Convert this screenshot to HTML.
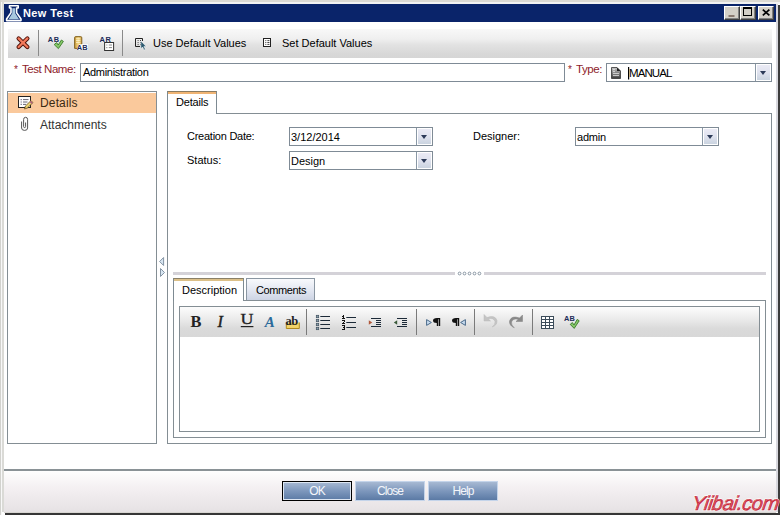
<!DOCTYPE html>
<html><head><meta charset="utf-8">
<style>
*{box-sizing:border-box;margin:0;padding:0}
html,body{width:780px;height:515px;overflow:hidden;background:#fff}
body{position:relative;font-family:"Liberation Sans",sans-serif;font-size:11px;color:#000}
.a{position:absolute}
.t{position:absolute;white-space:nowrap;line-height:11px;font-size:11px}
.frame{left:0;top:0;width:780px;height:515px;background:#fff;
  border-left:2px solid #dedede;border-top:2px solid #dcdcdc;border-right:2px solid #5a5a5a;border-bottom:2px solid #4a4a4a}
.title{left:4px;top:4px;width:772px;height:18px;background:#0a246a}
.tbtn{position:absolute;top:2px;width:16px;height:14px;background:#d4d0c8;border:1px solid;border-color:#fff #404040 #404040 #fff;box-shadow:inset -1px -1px 0 #808080}
.tb{left:8px;top:29px;width:764px;height:29px;background:linear-gradient(#f8f8f8,#efefef 35%,#e2e2e2 55%,#d8d8d8 85%,#d6d6d6)}
.sep{position:absolute;width:1px;background:#8a8a8a}
.inp{position:absolute;background:#fff;border:1px solid #7f8b96}
.dd{position:absolute;top:0;right:0;bottom:0;width:16px;border-left:1px solid #8a98a6;background:linear-gradient(#ececf6,#dfe2ee 50%,#c8d2de);box-shadow:inset 0 0 0 1px #fff}
.dd:after{content:"";position:absolute;left:3.5px;top:7px;border-left:3.5px solid transparent;border-right:3.5px solid transparent;border-top:4px solid #2c3a58}
.red{color:#8e1c2a}
.box{position:absolute;border:1px solid #848e94}
.btn{position:absolute;height:20px;background:linear-gradient(#a7b9d3,#7d97bc 50%,#5b7aa5);border:1px solid #c4d4ea;color:#f4f6fa;text-align:center;font-size:12px;line-height:18px;letter-spacing:-0.9px}
.etb{left:180px;top:307px;width:579px;height:30px;background:linear-gradient(#fcfcfc,#f4f4f4 20%,#e6e6e6 50%,#dadada 72%,#d8d8d8)}
</style></head><body>
<div class="a" style="left:0;top:0;width:780px;height:2px;background:#dcdad4"></div>
<div class="a" style="left:0;top:2px;width:780px;height:2px;background:#f2f2f2"></div>
<div class="a" style="left:0;top:0;width:1px;height:515px;background:#d2d2ce"></div>
<div class="a" style="left:1px;top:2px;width:1px;height:513px;background:#f8f8f8"></div>
<div class="a" style="left:2px;top:2px;width:2px;height:510px;background:#dadad6"></div>
<div class="a" style="left:776px;top:4px;width:2px;height:508px;background:#d8d8de"></div>
<div class="a" style="left:778px;top:5px;width:2px;height:508px;background:#3c3c3c"></div>
<div class="a" style="left:4px;top:512px;width:772px;height:1px;background:#d8d6d2"></div>
<div class="a" style="left:5px;top:513px;width:775px;height:2px;background:#363636"></div>
<div class="a title">
  <div class="tbtn" style="left:720px"></div>
  <div class="tbtn" style="left:736px"></div>
  <div class="tbtn" style="left:754px"></div>
</div>
<div class="t" style="left:23px;top:8px;color:#fff;font-weight:bold;letter-spacing:0.4px">New Test</div>

<div class="a tb">
  <div class="sep" style="left:30px;top:1px;height:26px"></div>
  <div class="sep" style="left:114px;top:1px;height:26px"></div>
</div>
<div class="t" style="left:153px;top:38px">Use Default Values</div>
<div class="t" style="left:282px;top:38px">Set Default Values</div>

<div class="t red" style="left:14px;top:64px;font-size:10px">*</div>
<div class="t red" style="left:22px;top:64px;font-size:11.5px;letter-spacing:-0.45px">Test Name:</div>
<div class="inp" style="left:80px;top:63px;width:485px;height:19px"></div>
<div class="t" style="left:83px;top:67px;letter-spacing:-0.3px">Administration</div>
<div class="t red" style="left:568px;top:64px;font-size:10px">*</div>
<div class="t red" style="left:576px;top:64px;font-size:11.5px;letter-spacing:-0.4px">Type:</div>
<div class="inp" style="left:606px;top:63px;width:166px;height:19px"><div class="dd"></div></div>
<div class="t" style="left:629px;top:68px;font-size:11.5px;letter-spacing:-0.9px">MANUAL</div>

<!-- left panel -->
<div class="box" style="left:7px;top:91px;width:150px;height:353px"></div>
<div class="a" style="left:8px;top:93px;width:148px;height:20px;background:#fac99c"></div>
<div class="t" style="left:40px;top:97px;font-size:12px;line-height:12px;color:#3a2a12;letter-spacing:0.15px">Details</div>
<div class="t" style="left:40px;top:119px;font-size:12px;line-height:12px;color:#333">Attachments</div>

<!-- tab panel -->
<div class="box" style="left:167px;top:113px;width:605px;height:331px"></div>
<div class="a" style="left:167px;top:91px;width:50px;height:23px;border:1px solid #7d8a92;border-top-color:#8a7c62;border-bottom:none;background:#fff;box-shadow:inset 0 2px 0 #f0b474"></div>
<div class="t" style="left:176px;top:97px;letter-spacing:-0.2px">Details</div>

<div class="t" style="left:187px;top:131px;letter-spacing:-0.25px">Creation Date:</div>
<div class="t" style="left:187px;top:155px">Status:</div>
<div class="inp" style="left:289px;top:127px;width:144px;height:19px"><div class="dd"></div></div>
<div class="t" style="left:291px;top:132px">3/12/2014</div>
<div class="inp" style="left:289px;top:151px;width:144px;height:19px"><div class="dd"></div></div>
<div class="t" style="left:291px;top:156px">Design</div>
<div class="t" style="left:473px;top:131px">Designer:</div>
<div class="inp" style="left:575px;top:127px;width:144px;height:19px"><div class="dd"></div></div>
<div class="t" style="left:577px;top:132px;letter-spacing:-0.2px">admin</div>

<!-- splitter -->
<div class="a" style="left:173px;top:272px;width:282px;height:3px;background:#d4d2d8"></div>
<div class="a" style="left:484px;top:272px;width:282px;height:3px;background:#d4d2d8"></div>

<!-- description tabs -->
<div class="box" style="left:173px;top:300px;width:593px;height:138px"></div>
<div class="a" style="left:173px;top:278px;width:71px;height:23px;border:1px solid #7d8a92;border-top-color:#8a8068;border-bottom:none;background:#fff;box-shadow:inset 0 2px 0 #dcc088"></div>
<div class="t" style="left:182px;top:285px">Description</div>
<div class="a" style="left:246px;top:278px;width:69px;height:22px;border:1px solid #8a96a2;border-bottom:none;background:linear-gradient(#f8f9fc,#e4e8f2 50%,#cdd4e4)"></div>
<div class="t" style="left:256px;top:285px;letter-spacing:-0.4px">Comments</div>

<div class="box" style="left:179px;top:306px;width:581px;height:126px"></div>
<div class="a etb"></div>

<!-- footer -->
<div class="a" style="left:4px;top:471px;width:772px;height:41px;background:linear-gradient(#fefefe,#f4f0f2 40%,#e6e2e4)"></div>
<div class="a" style="left:4px;top:469px;width:772px;height:2px;background:#8a9296"></div>
<div class="btn" style="left:282px;top:481px;width:70px;border-color:#000;box-shadow:inset 0 0 0 1px #dde6f2">OK</div>
<div class="btn" style="left:355px;top:481px;width:70px">Close</div>
<div class="btn" style="left:428px;top:481px;width:70px">Help</div>

<svg class="a" style="left:0;top:0" width="780" height="515" viewBox="0 0 780 515">
<!-- flask -->
<path d="M9.5,5.8 H18.2 V8 H16.6 V12.6 L21,19 V20.6 H6.6 V19 L11,12.6 V8 H9.5 Z" fill="#0a246a" stroke="#fff" stroke-width="1.6" stroke-linejoin="round"/>
<path d="M12.3,8.2 H15.2 V13.2 L19,19.2 H8.6 L12.3,13.2 Z" fill="#a8c8e0"/>
<!-- red X -->
<g stroke-linecap="round"><path d="M18.6,38.4 L27.4,47 M27.4,38.4 L18.6,47" stroke="#4e1008" stroke-width="4.2"/>
<path d="M18.6,38.4 L27.4,47 M27.4,38.4 L18.6,47" stroke="#f27a5c" stroke-width="2.3"/></g>
<!-- AB check -->
<text x="47.8" y="41.8" font-family="Liberation Sans" font-size="7.4" font-weight="bold" fill="#1c2c58" letter-spacing="0.5">AB</text>
<path d="M54.2,44.6 L56.6,42.6 L58.2,45 L61.4,40 L63.4,41.4 L58.4,48.6 Z" fill="#86c86a" stroke="#3a7a2a" stroke-width="0.9" stroke-linejoin="round"/>
<!-- doc + AB -->
<defs><linearGradient id="gold" x1="0" y1="0" x2="1" y2="0"><stop offset="0" stop-color="#c89838"/><stop offset="0.5" stop-color="#f4d888"/><stop offset="1" stop-color="#d0a040"/></linearGradient>
<linearGradient id="docg" x1="0" y1="0" x2="0" y2="1"><stop offset="0" stop-color="#c8c8c8"/><stop offset="1" stop-color="#3a3a3a"/></linearGradient></defs>
<path d="M74.6,48.4 V37.8 Q74.6,36.6 75.8,36.6 H80.6 Q81.8,36.6 81.8,37.8 V44 L77.2,48.4 Z" fill="url(#gold)" stroke="#7a5a18" stroke-width="0.9"/>
<path d="M76,38.8 H80.4 M76,40.6 H80.4 M76,42.4 H80.4" stroke="#fff8d8" stroke-width="0.8"/>
<path d="M76.5,50 L79,44.2 H88 V50 Z" fill="#fff"/>
<text x="76.8" y="49.6" font-family="Liberation Sans" font-size="7.4" font-weight="bold" fill="#1c2c58" letter-spacing="0.2">AB</text>
<!-- AR table -->
<text x="99.6" y="41.6" font-family="Liberation Sans" font-size="7.4" font-weight="bold" fill="#1c2c58" letter-spacing="0.5">AR</text>
<rect x="104.6" y="42.5" width="9" height="8" fill="#fff" stroke="#333" stroke-width="1"/>
<path d="M106.2,45 H107.4 M106.2,47.6 H107.4" stroke="#999" stroke-width="1.2"/>
<path d="M108.8,45 H112 M108.8,47.6 H112" stroke="#888" stroke-width="1"/>
<!-- use default -->
<path d="M135.5,46.5 V38.5 H142.5 V41" fill="none" stroke="#222" stroke-width="1"/>
<path d="M135.5,46.5 H140" stroke="#222" stroke-width="1"/>
<path d="M137.6,40.5 h1 M140,40.5 h1 M137.6,42.6 h1 M140,42.6 h1 M137.6,44.6 h1 M140,44.6 h1" stroke="#444" stroke-width="1"/>
<path d="M140.8,41 L146.2,46.4 H143.9 L145.4,49.4 L144,50 L142.6,47 L140.8,48.8 Z" fill="#2c5a70" stroke="#fff" stroke-width="0.5"/>
<!-- set default -->
<rect x="263.5" y="38.5" width="7" height="8" fill="#fff" stroke="#222" stroke-width="1"/>
<path d="M265.3,40.6 h1 M267.4,40.6 h2 M265.3,42.5 h1 M267.4,42.5 h2 M265.3,44.4 h1 M267.4,44.4 h2" stroke="#444" stroke-width="1"/>
<!-- type doc icon -->
<path d="M611.5,67.5 H617 L620.5,71 V78.5 H611.5 Z" fill="url(#docg)" stroke="#333" stroke-width="0.8"/><path d="M617,67.5 V71 H620.5 Z" fill="#222"/>
<path d="M613,69.6 H615 M613,71.6 H615 M613,73.6 H619 M613,75.6 H619" stroke="#e0e0e0" stroke-width="0.9"/>
<rect x="628" y="67" width="1.2" height="12.5" fill="#000"/>
<!-- details icon -->
<rect x="18.5" y="96.5" width="12" height="11" fill="#fff" stroke="#222" stroke-width="1"/>
<path d="M20.5,99.6 h1.5 M20.5,102 h1.5 M20.5,104.4 h1.5" stroke="#889" stroke-width="1.2"/>
<path d="M23,99.6 H28.5 M23,102 H27.5 M23,104.4 H26" stroke="#556" stroke-width="0.9"/>
<path d="M24.5,109 L25.4,106 L31,100.6 L33,102.6 L27.4,108 Z" fill="#e8d070" stroke="#5a4010" stroke-width="0.7"/>
<path d="M30.2,101.4 L32.2,103.4" stroke="#b06080" stroke-width="1.6"/>
<!-- paperclip -->
<path d="M21.6,121.5 V128 Q21.6,130.4 24.6,130.4 Q27.6,130.4 27.6,128 V119.5 Q27.6,117.3 25.6,117.3 Q23.6,117.3 23.6,119.5 V126.5 Q23.6,127.6 24.6,127.6 Q25.6,127.6 25.6,126.5 V122.5" fill="none" stroke="#555" stroke-width="1"/>
<!-- splitter arrows -->
<path d="M163.6,257.5 V265.5 L159.6,261.5 Z" fill="#d8e6f2" stroke="#8494a4" stroke-width="1"/>
<path d="M160.5,268.5 V276.5 L164.5,272.5 Z" fill="#d8e6f2" stroke="#8494a4" stroke-width="1"/>
<!-- splitter dots -->
<g fill="#fff" stroke="#7e8c9a" stroke-width="0.9"><circle cx="459.6" cy="273.5" r="1.4"/><circle cx="464.5" cy="273.5" r="1.4"/><circle cx="469.5" cy="273.5" r="1.4"/><circle cx="474.5" cy="273.5" r="1.4"/><circle cx="479.4" cy="273.5" r="1.4"/></g>
<!-- editor toolbar separators -->
<path d="M306.5,309 V335 M416.5,309 V335 M474.5,309 V335 M532.5,309 V335" stroke="#7a7a7a" stroke-width="1"/>
<!-- B I U A ab -->
<text x="190.4" y="327" font-family="Liberation Serif" font-size="16.4" font-weight="bold" fill="#222">B</text>
<text x="217.4" y="327" font-family="Liberation Serif" font-size="16.4" font-style="italic" fill="#222" stroke="#222" stroke-width="0.4">I</text>
<text x="0" y="0" font-family="Liberation Serif" font-size="14" fill="#222" stroke="#222" stroke-width="0.3" transform="translate(240.6,323.8) scale(1.28,0.98)">U</text>
<rect x="240.8" y="326" width="12.6" height="1.2" fill="#222"/>
<text x="264.8" y="327" font-family="Liberation Serif" font-size="15" font-style="italic" font-weight="bold" fill="#2a6a9a">A</text>
<path d="M286.3,322.5 V328.5 H299.3 V322.5" fill="#f0d060" stroke="#b08a20" stroke-width="1"/>
<rect x="287.3" y="325" width="11" height="2.6" fill="#f2d46a"/>
<text x="285.4" y="324.8" font-family="Liberation Serif" font-size="12.5" font-weight="bold" fill="#222" letter-spacing="-0.4">ab</text>
<!-- bullets -->
<g fill="#8aa0aa" stroke="#405060" stroke-width="0.7"><rect x="316.3" y="315.3" width="2.4" height="2.4"/><rect x="316.3" y="319.3" width="2.4" height="2.4"/><rect x="316.3" y="323.3" width="2.4" height="2.4"/><rect x="316.3" y="327.3" width="2.4" height="2.4"/></g>
<path d="M320.3,316.5 H330 M320.3,320.5 H330 M320.3,324.5 H330 M320.3,328.5 H330" stroke="#1c2a38" stroke-width="1.2"/>
<!-- numbers -->
<g fill="#111" shape-rendering="crispEdges"><rect x="343" y="315" width="1" height="1"/><rect x="342" y="316" width="1" height="1"/><rect x="343" y="316" width="1" height="1"/><rect x="343" y="317" width="1" height="1"/><rect x="342" y="318" width="1" height="1"/><rect x="343" y="318" width="1" height="1"/><rect x="344" y="318" width="1" height="1"/><rect x="342" y="320" width="1" height="1"/><rect x="343" y="320" width="1" height="1"/><rect x="344" y="320" width="1" height="1"/><rect x="344" y="321" width="1" height="1"/><rect x="343" y="322" width="1" height="1"/><rect x="342" y="323" width="1" height="1"/><rect x="343" y="323" width="1" height="1"/><rect x="344" y="323" width="1" height="1"/><rect x="342" y="325" width="1" height="1"/><rect x="343" y="325" width="1" height="1"/><rect x="344" y="325" width="1" height="1"/><rect x="344" y="326" width="1" height="1"/><rect x="343" y="327" width="1" height="1"/><rect x="344" y="327" width="1" height="1"/><rect x="344" y="328" width="1" height="1"/><rect x="342" y="329" width="1" height="1"/><rect x="343" y="329" width="1" height="1"/><rect x="344" y="329" width="1" height="1"/></g>
<path d="M346.3,317.5 H356 M346.3,322.5 H356 M346.3,327.5 H356" stroke="#1c2a38" stroke-width="1.2"/>
<!-- indent -->
<path d="M371,318.5 H381 M376,320.5 H381 M376,322.5 H381 M376,324.5 H381 M371,326.5 H381" stroke="#1c2a38" stroke-width="1"/>
<path d="M368.8,320.3 L372.3,322.5 L368.8,324.7 Z" fill="#b0583a"/>
<!-- outdent -->
<path d="M397,318.5 H407 M402,320.5 H407 M402,322.5 H407 M402,324.5 H407 M397,326.5 H407" stroke="#1c2a38" stroke-width="1"/>
<path d="M397.2,320.3 L393.8,322.5 L397.2,324.7 Z" fill="#3a5a3a"/>
<!-- LTR RTL -->
<path d="M426.6,319.6 V325.4 L431.4,322.5 Z" fill="#c8dcf0" stroke="#4a6a8a" stroke-width="1"/>
<path transform="translate(433,0)" d="M4,318 H7.2 V326 H5.8 V319.3 H5.2 V326 H3.8 V323 Q0,323 0,320.5 Q0,318 4,318 Z" fill="#111"/>
<path transform="translate(452,0)" d="M4,318 H7.2 V326 H5.8 V319.3 H5.2 V326 H3.8 V323 Q0,323 0,320.5 Q0,318 4,318 Z" fill="#111"/>
<path d="M465.4,319.6 V325.4 L460.6,322.5 Z" fill="#c8dcf0" stroke="#4a6a8a" stroke-width="1"/>
<!-- undo redo -->
<path d="M484,314.5 V321 H490.5 L488.2,318.8 Q493.5,317.5 495,321.5 Q495.5,324.5 492.2,327 Q497.5,325 497,320.5 Q495,314.5 487,317.5 Z" fill="#c4c4c4" stroke="#b8b8b8" stroke-width="0.5"/>
<path d="M522.5,315 V321.5 H516 L518.3,319.3 Q513,318 511.5,322 Q511,325 514.3,327.8 Q509,325.5 509.5,321 Q511.5,315 519.5,318 Z" fill="#8a8a8a" stroke="#808080" stroke-width="0.5"/>
<!-- table -->
<rect x="541" y="316" width="13" height="13" fill="#fff"/><g fill="#3c4c5a" shape-rendering="crispEdges"><rect x="541" y="316" width="1" height="13"/><rect x="545" y="316" width="1" height="13"/><rect x="549" y="316" width="1" height="13"/><rect x="553" y="316" width="1" height="13"/><rect x="541" y="316" width="13" height="1"/><rect x="541" y="319" width="13" height="1"/><rect x="541" y="322" width="13" height="1"/><rect x="541" y="325" width="13" height="1"/><rect x="541" y="328" width="13" height="1"/></g>
<!-- spell -->
<text x="564" y="320.8" font-family="Liberation Sans" font-size="7.4" font-weight="bold" fill="#1c2c58" letter-spacing="0.1">AB</text>
<path d="M570.2,324.4 L572.4,322.6 L574,325 L577.2,319.4 L579.2,320.8 L574.2,328.4 Z" fill="#86c86a" stroke="#3a7a2a" stroke-width="0.9" stroke-linejoin="round"/>
<!-- title buttons glyphs -->
<rect x="728.5" y="15" width="6" height="2" fill="#8a7a70"/>
<rect x="743.5" y="7.5" width="8" height="8" fill="none" stroke="#000" stroke-width="1"/>
<rect x="743" y="7" width="9" height="2" fill="#000"/>
<path d="M762.8,9.6 L769.4,15.4 M769.4,9.6 L762.8,15.4" stroke="#000" stroke-width="1.7"/>
</svg>
<svg class="a" style="left:0;top:0" width="780" height="515" viewBox="0 0 780 515">
<g transform="translate(691,509.5) skewX(-8)">
<text x="0" y="0" font-family="Liberation Sans" font-size="20" font-style="italic" letter-spacing="-0.5" fill="#fff" stroke="#fff" stroke-width="1.6" opacity="0.9">Yiibai.com</text>
<text x="0" y="0" font-family="Liberation Sans" font-size="20" font-style="italic" letter-spacing="-0.5" fill="#cc1f36" stroke="#c41c32" stroke-width="0.7">Yiibai.com</text>
<text x="-0.7" y="-0.5" font-family="Liberation Sans" font-size="20" font-style="italic" letter-spacing="-0.5" fill="none" stroke="#fff" stroke-width="0.4" opacity="0.5">Yiibai.com</text>
</g>
</svg>
</body></html>
